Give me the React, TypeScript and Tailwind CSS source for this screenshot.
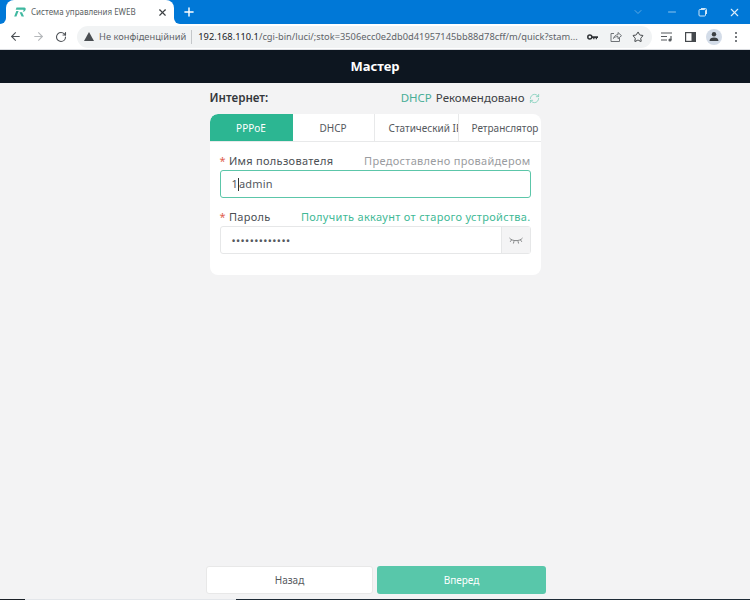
import { ArrowLeft, ArrowRight, RotateCw, X, Plus, ChevronDown, Minus, Star, RefreshCw } from "lucide-react";

function Logo() {
  return (
    <svg width="12" height="10" viewBox="0 0 12 10" className="shrink-0">
      <path d="M2.500.5h7.800c1.300 0 1.700 1 1.300 2.300C11.100 4.300 9.600 5 8 5.200L10 9.500H7.600L5.600 5.300H7.500C8.600 5.300 9.300 4.600 9.500 3.700c.1-.5 0-.9-.5-.9H1.700Z" fill="#3fb8a0" />
      <path d="M2.300 4H4.600L2.400 9.500H.2Z" fill="#3fb8a0" />
    </svg>
  );
}

function TabBar() {
  return (
    <div className="flex h-6 items-end bg-[#0078d7]">
      <div className="h-[6px] w-[6px] bg-white">
        <div className="h-full w-full rounded-br-[6px] bg-[#0078d7]" />
      </div>
      <div className="flex h-[24px] w-[168px] items-center rounded-t-[8px] bg-white pl-2 pr-[6px]">
        <Logo />
        <span className="ml-[5px] flex-1 truncate text-[8px] text-[#5b5f64]">Система управления EWEB</span>
        <X size={11} strokeWidth={2.500} className="text-[#3c4043]" />
      </div>
      <div className="h-[6px] w-[6px] bg-white">
        <div className="h-full w-full rounded-bl-[6px] bg-[#0078d7]" />
      </div>
      <div className="flex h-6 w-[18px] items-center justify-center">
        <Plus size={14} strokeWidth={2.500} className="text-white" />
      </div>
      <div className="flex h-6 flex-1 items-center justify-end">
        <ChevronDown size={12} className="mr-[22px] text-[#5ea9e3]" />
        <Minus size={12} className="mr-[20px] text-[#8cc4ee]" />
        <svg width="10" height="10" viewBox="0 0 10 10" className="mr-[20px]" fill="none" stroke="#cfe6f7" strokeWidth="1">
          <rect x="1" y="2.500" width="6.500" height="6.500" rx="1" />
          <path d="M3 1.500h4.500a1 1 0 0 1 1 1V7" />
        </svg>
        <X size={13} className="mr-[9px] text-[#dcedf9]" />
      </div>
    </div>
  );
}

function Toolbar() {
  return (
    <div className="flex h-[26px] items-center border-b border-[#dadce0] bg-white pl-[9px]">
      <ArrowLeft size={13} strokeWidth={2} className="text-[#4d5156]" />
      <ArrowRight size={13} strokeWidth={2} className="ml-[10px] text-[#b5b8bb]" />
      <RotateCw size={12} strokeWidth={2.200} className="ml-[10px] text-[#4d5156]" />
      <div className="ml-[10px] flex h-[22px] w-[575px] items-center rounded-full bg-[#f1f3f4] pl-[7px]">
        <svg width="10" height="9" viewBox="0 0 10 9" className="shrink-0">
          <path d="M5 0 10 9H0Z" fill="#4a4e52" />
        </svg>
        <span className="ml-[5px] whitespace-nowrap text-[9.300px] text-[#5f6368]">Не конфіденційний</span>
        <span className="ml-[5px] h-[14px] w-px bg-[#c4c7ca]" />
        <span className="ml-[6px] w-[381px] truncate whitespace-nowrap text-[9.300px] text-[#5f6368]">
          <span className="text-[#202124]">192.168.110.1</span>/cgi-bin/luci/;stok=3506ecc0e2db0d41957145bb88d78cff/m/quick?stam...
        </span>
        <svg width="11" height="6" viewBox="0 0 11 6" className="ml-[8px] shrink-0">
          <circle cx="2.800" cy="3" r="2" fill="none" stroke="#303336" strokeWidth="1.500" />
          <path d="M4.500 2.200H11V4H10V5.200H8.700V4H7.500V5.200H6.200V4H4.500Z" fill="#303336" />
        </svg>
        <svg width="12" height="11" viewBox="0 0 12 11" className="ml-[12px] shrink-0" fill="none" stroke="#6f7377" strokeWidth="1">
          <path d="M4 2.500H1V10.500H9.500V7" />
          <path d="M3.500 7.500C4 5 6 3.700 8 3.700V1.500L11.500 4.700 8 7.700V5.600C6 5.600 4.700 6 3.500 7.500Z" />
        </svg>
        <Star size={12} strokeWidth={2} className="ml-[10px] text-[#3c4043]" />
      </div>
      <svg width="12" height="10" viewBox="0 0 12 10" className="ml-[9px] shrink-0" fill="none" stroke="#55595d" strokeWidth="1.200">
        <path d="M0 1h11M0 4.500h6M0 8h6" />
        <path d="M10 4v4" />
        <circle cx="9" cy="8" r="1" fill="#55595d" />
      </svg>
      <svg width="11" height="10" viewBox="0 0 11 10" className="ml-[12px] shrink-0" fill="none">
        <rect x=".6" y=".6" width="9.800" height="8.800" stroke="#45494d" strokeWidth="1.200" />
        <rect x="6.500" y=".6" width="4" height="8.800" fill="#45494d" />
      </svg>
      <div className="ml-[10px] flex h-4 w-4 items-center justify-center rounded-full bg-[#d3dce8]">
        <svg width="10" height="9" viewBox="0 0 10 9">
          <circle cx="5" cy="2.300" r="2.200" fill="#3c4043" />
          <path d="M0.500 9c0-2.500 2-3.500 4.500-3.500S9.500 6.500 9.500 9Z" fill="#3c4043" />
        </svg>
      </div>
      <div className="ml-[13px] flex flex-col gap-[2px]">
        <span className="h-[2px] w-[2px] rounded-full bg-[#4d5156]" />
        <span className="h-[2px] w-[2px] rounded-full bg-[#4d5156]" />
        <span className="h-[2px] w-[2px] rounded-full bg-[#4d5156]" />
      </div>
    </div>
  );
}

function EyeClosed() {
  return (
    <svg width="16" height="9" viewBox="0 0 16 9" fill="none" stroke="#77797b" strokeWidth=".9">
      <path d="M1.500 2C4 5.500 12 5.500 14.500 2" />
      <path d="M3.500 4 2.200 5.800M6 5.200 5.400 7.500M10 5.200l.6 2.300M12.500 4l1.300 1.800" />
    </svg>
  );
}

function Card() {
  return (
    <div className="mt-[7px] h-[161px] overflow-hidden rounded-[8px] bg-white">
      <div className="flex h-[28px] border-b border-[#e8e9ea] text-[10px] text-[#55595e]">
        <div className="flex w-[83px] items-center justify-center rounded-tl-[8px] bg-[#2cb692] pt-px text-white">PPPoE</div>
        <div className="flex w-[82px] items-center justify-center border-r border-[#e8e9ea] pt-px">DHCP</div>
        <div className="flex w-[84px] items-center overflow-hidden border-r border-[#e8e9ea] pt-px pl-[14px]">
          <span className="whitespace-nowrap">Статический IP</span>
        </div>
        <div className="flex flex-1 items-center overflow-hidden pt-px pl-[13px]">
          <span className="whitespace-nowrap">Ретранслятор</span>
        </div>
      </div>
      <div className="px-[10px]">
        <div className="mt-[11px] flex h-[17px] items-center justify-between text-[11px] tracking-[0.3px]">
          <span className="text-[#4b4f54]">
            <span className="mr-[3px] text-[#e0604f]">*</span>Имя пользователя
          </span>
          <span className="text-[#9a9ca0]">Предоставлено провайдером</span>
        </div>
        <div className="flex h-[28px] items-center rounded-[3px] border border-[#5cc6a9] pl-[11px] text-[11px] tracking-[0.2px] text-[#55595e]">
          <span>1</span>
          <span className="h-[13px] w-px bg-[#333]" />
          <span>admin</span>
        </div>
        <div className="mt-[11px] flex h-[17px] items-center justify-between text-[11px] tracking-[0.3px]">
          <span className="text-[#4b4f54]">
            <span className="mr-[3px] text-[#e0604f]">*</span>Пароль
          </span>
          <span className="text-[#3fb996]">Получить аккаунт от старого устройства.</span>
        </div>
        <div className="flex h-[28px] rounded-[3px] border border-[#e6e7e8]">
          <div className="flex flex-1 items-center pl-[11px] text-[11px] leading-none tracking-[0.4px] text-[#55595e]">•••••••••••••</div>
          <div className="flex w-[29px] items-center justify-center border-l border-[#e6e7e8] bg-[#f4f4f5]">
            <EyeClosed />
          </div>
        </div>
      </div>
    </div>
  );
}

export default function App() {
  return (
    <div className="flex h-[600px] w-[750px] flex-col overflow-hidden bg-[#f3f3f4] font-['Noto_Sans','Open_Sans',sans-serif]">
      <TabBar />
      <Toolbar />
      <div className="flex h-[33px] items-center justify-center bg-[#0d1620] pt-px text-[13px] font-bold text-white">Мастер</div>
      <div className="flex flex-1 flex-col">
        <div className="mx-auto mt-[6px] w-[331px]">
          <div className="flex h-[18px] items-center justify-between">
            <span className="text-[11.600px] font-semibold text-[#33373b]">Интернет:</span>
            <span className="flex items-center text-[11.500px] text-[#3d4145]">
              <span className="mr-[4px] text-[#48ae97]">DHCP</span>Рекомендовано
              <RefreshCw size={11} strokeWidth={1.800} className="ml-[4px] mr-px text-[#7fcfba]" />
            </span>
          </div>
          <Card />
        </div>
        <div className="mt-auto ml-[206px] flex gap-[4px] pb-[5px] text-[10px]">
          <div className="flex h-[28px] w-[167px] items-center justify-center rounded-[3px] border border-[#e8e8e8] bg-white text-[#55595e]">Назад</div>
          <div className="flex h-[28px] w-[169px] items-center justify-center rounded-[3px] bg-[#58c7aa] text-white">Вперед</div>
        </div>
        <div className="flex h-px">
          <div className="w-[25px] bg-[#1a2026]" />
          <div className="w-[211px] bg-[#e3e6ea]" />
          <div className="flex-1 bg-[#1d2a36]" />
        </div>
      </div>
    </div>
  );
}
